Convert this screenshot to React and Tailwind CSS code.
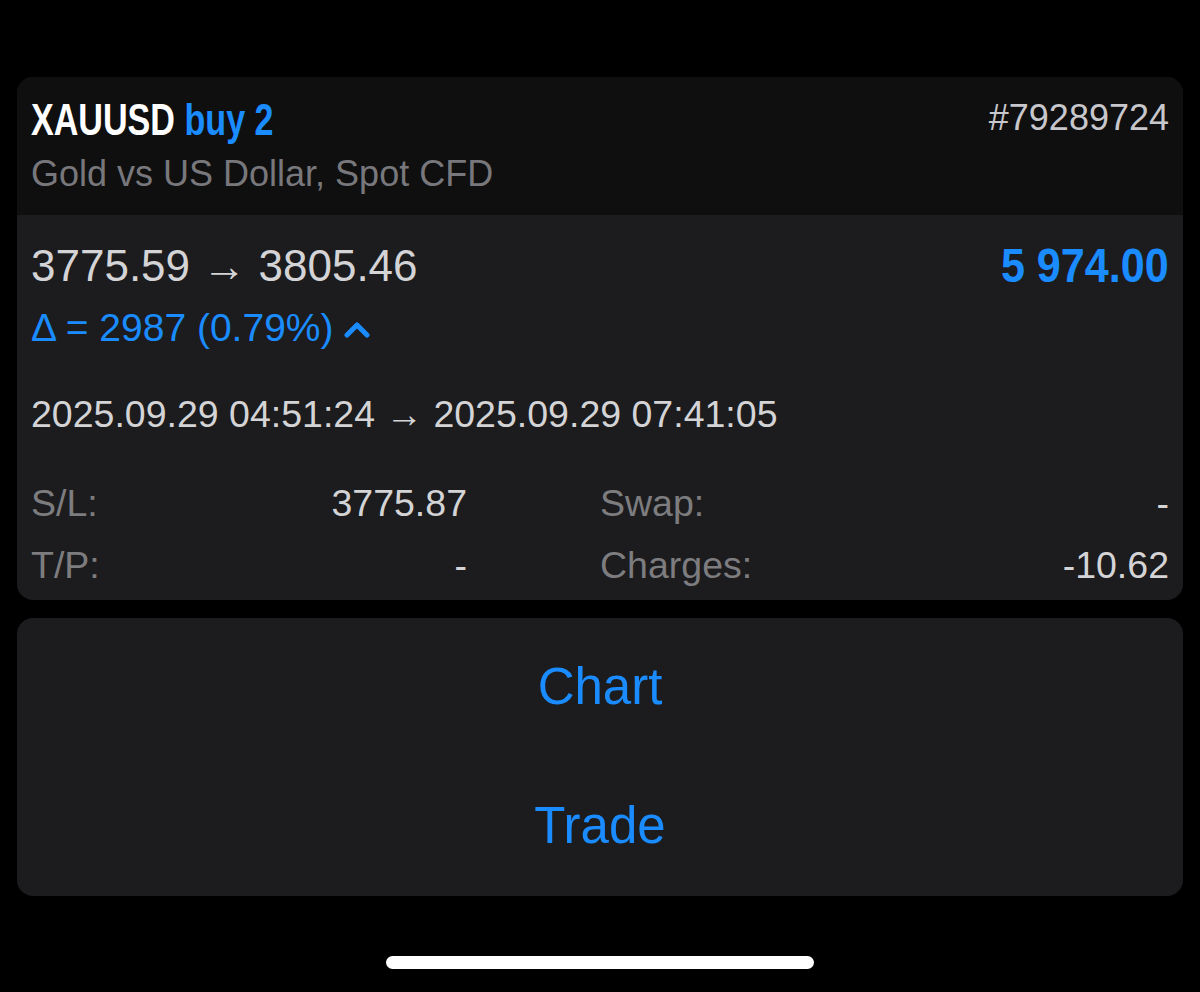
import React from "react";

const sans = { fontFamily: '"Liberation Sans", Arial, sans-serif' };

function Row({ label, value, label2, value2 }) {
  return (
    <div className="flex items-center h-[62px] text-[37.5px]">
      <div className="w-[436px] flex justify-between">
        <span className="text-[#7d7d80]">{label}</span>
        <span className="text-[#d4d4d6]">{value}</span>
      </div>
      <div className="flex-1 flex justify-between pl-[133px]">
        <span className="text-[#7d7d80]">{label2}</span>
        <span className="text-[#d4d4d6]">{value2}</span>
      </div>
    </div>
  );
}

export default function App() {
  return (
    <div className="w-[1200px] h-[992px] bg-black flex flex-col" style={sans}>
      <div className="mx-[17px] mt-[77px] rounded-[16px] overflow-hidden bg-[#1c1c1e]">
        {/* header */}
        <div className="h-[138px] bg-[#0f0f10] px-[14px] pt-[18px]">
          <div className="flex justify-between items-start">
            <div className="text-[44px] font-bold leading-[50px] whitespace-nowrap inline-block origin-left scale-x-[0.775]">
              <span className="text-white">XAUUSD</span>{" "}
              <span className="text-[#1a8cff]">buy 2</span>
            </div>
            <div className="text-[36px] text-[#c7c7cc] leading-[46px]">#79289724</div>
          </div>
          <div className="text-[36px] text-[#78787c] leading-[42px] mt-[8px]">
            Gold vs US Dollar, Spot CFD
          </div>
        </div>

        {/* body */}
        <div className="px-[14px] pt-[26px] pb-[4px]">
          <div className="flex justify-between items-center h-[50px]">
            <span className="text-[44px] text-[#d4d4d6]">3775.59 → 3805.46</span>
            <span className="text-[49px] font-bold text-[#1a8cff] whitespace-nowrap inline-block origin-right scale-x-[0.88]">
              5 974.00
            </span>
          </div>
          <div className="flex items-center h-[46px] mt-[14px] text-[39px] text-[#1a8cff]">
            <span>Δ = 2987 (0.79%)</span>
            <svg className="ml-[10px] mt-[2px]" width="26" height="18" viewBox="0 0 26 18">
              <path
                d="M3 15 L13 5 L23 15"
                fill="none"
                stroke="#1a8cff"
                strokeWidth="5"
                strokeLinecap="round"
                strokeLinejoin="round"
              />
            </svg>
          </div>
          <div className="h-[50px] flex items-center mt-[38px] text-[37.5px] text-[#d4d4d6]">
            2025.09.29 04:51:24 → 2025.09.29 07:41:05
          </div>
          <div className="mt-[33px]">
            <Row label="S/L:" value="3775.87" label2="Swap:" value2="-" />
            <Row label="T/P:" value="-" label2="Charges:" value2="-10.62" />
          </div>
        </div>
      </div>

      <div className="mx-[17px] mt-[18px] h-[278px] rounded-[16px] bg-[#1c1c1e] flex flex-col">
        <div className="h-[139px] flex items-center justify-center text-[51px] text-[#1a8cff]">
          Chart
        </div>
        <div className="h-[139px] flex items-center justify-center text-[51px] text-[#1a8cff]">
          Trade
        </div>
      </div>

      <div className="flex justify-center mt-[60px]">
        <div className="w-[428px] h-[13px] rounded-full bg-white" />
      </div>
    </div>
  );
}
